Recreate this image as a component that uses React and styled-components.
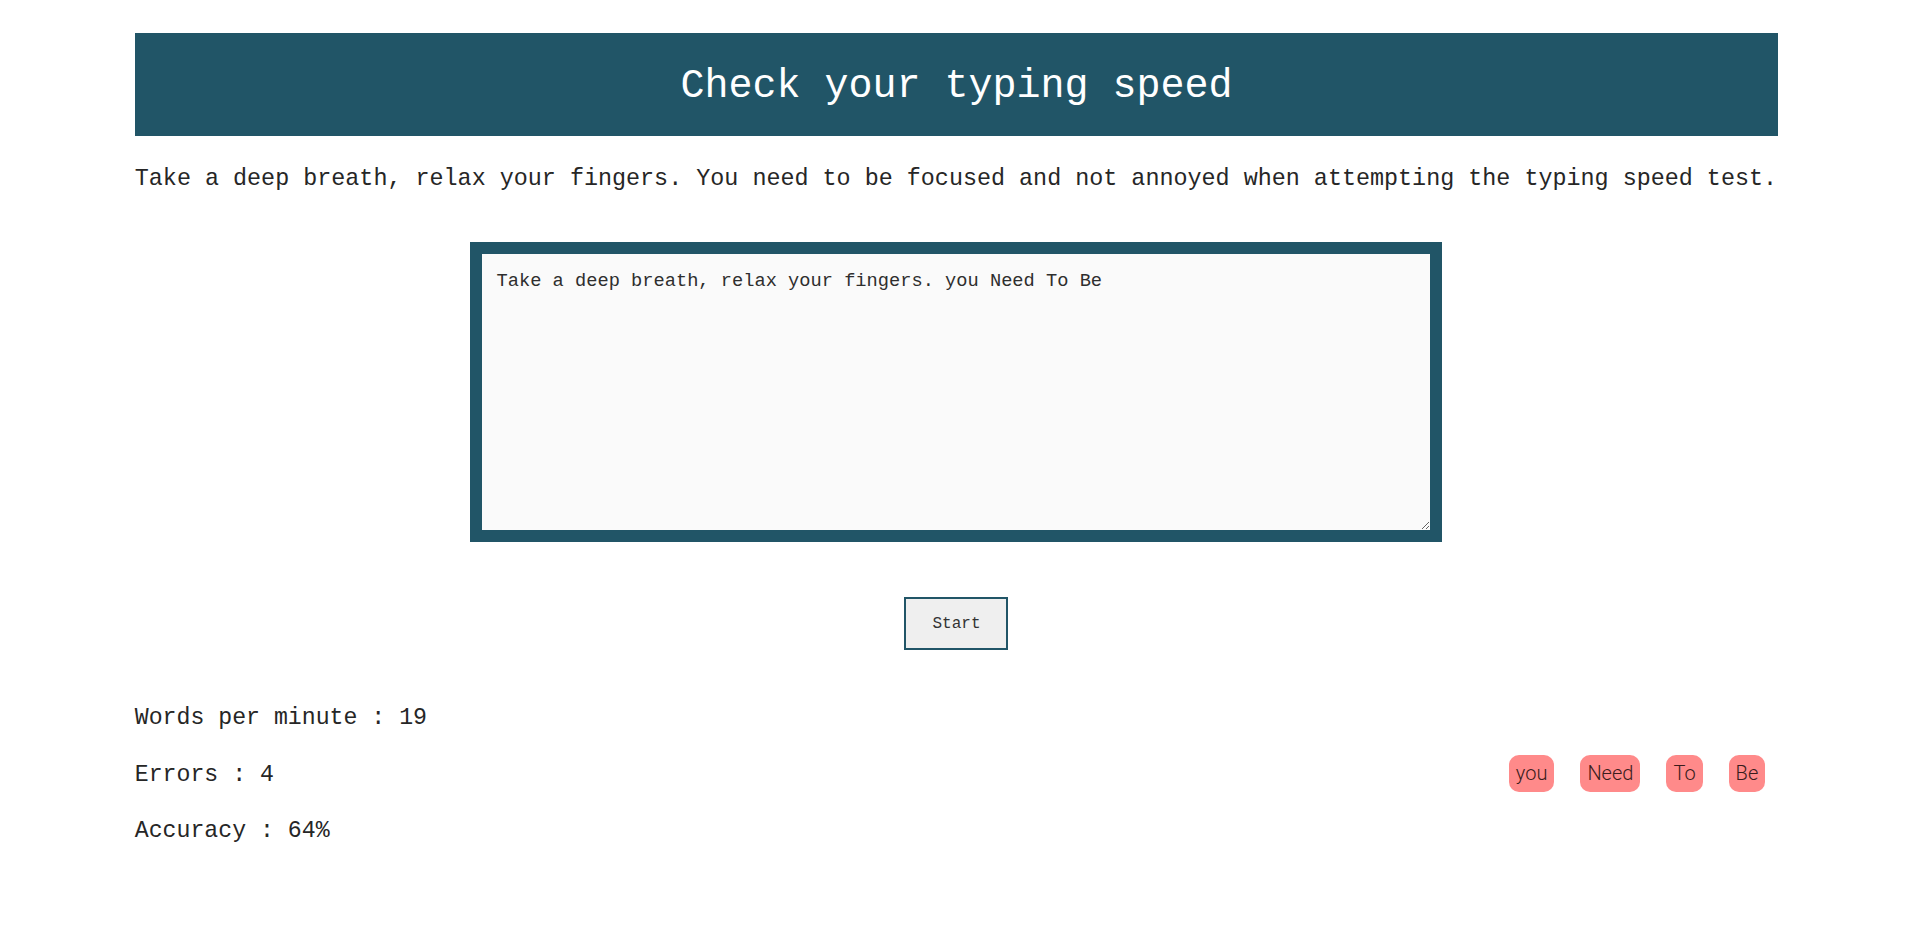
import styled, { createGlobalStyle } from "styled-components";

const typed = "Take a deep breath, relax your fingers. you Need To Be";
const wrongWords = ["you", "Need", "To", "Be"];

const App = () => {
  return (
    <>
      <GlobalStyle />
      <Page>
        <Header>
          <h1>Check your typing speed</h1>
        </Header>
        <Intro>
          Take a deep breath, relax your fingers. You need to be focused and
          not annoyed when attempting the typing speed test.
        </Intro>
        <TypingArea>
          <textarea defaultValue={typed} spellCheck={false} />
        </TypingArea>
        <Controls>
          <StartButton>Start</StartButton>
        </Controls>
        <Results>
          <Stats>
            <p>Words per minute : 19</p>
            <p>Errors : 4</p>
            <p>Accuracy : 64%</p>
          </Stats>
          <Mistakes>
            {wrongWords.map((w) => (
              <Badge key={w}>{w}</Badge>
            ))}
          </Mistakes>
        </Results>
      </Page>
    </>
  );
};

const GlobalStyle = createGlobalStyle`
  body {
    margin: 0;
    background: #fff;
    color: #262626;
    font-family: "Liberation Mono", "DejaVu Sans Mono", monospace;
  }
`;

const Page = styled.div`
  width: 86%;
  margin: 0 auto;
  padding: 33px 0 0 2px;
`;

const Header = styled.div`
  display: flex;
  align-items: center;
  justify-content: center;
  height: 103px;
  background-color: #215567;
  h1 {
    margin: 0;
    padding-top: 4px;
    color: #fff;
    font-size: 40px;
    font-weight: 400;
  }
`;

const Intro = styled.p`
  margin: 29px 0 0;
  font-size: 23.4px;
  line-height: 28px;
  white-space: nowrap;
`;

const TypingArea = styled.div`
  display: flex;
  justify-content: center;
  margin-top: 49px;
  textarea {
    box-sizing: border-box;
    width: 972px;
    height: 300px;
    padding: 16px 14px 12px;
    border: 12px solid #215567;
    background-color: #fafafa;
    color: #2e2e2e;
    font-family: "Liberation Mono", "DejaVu Sans Mono", monospace;
    font-size: 18.7px;
    outline: none;
  }
`;

const Controls = styled.div`
  display: flex;
  justify-content: center;
  margin-top: 55px;
`;

const StartButton = styled.button`
  width: 86px;
  height: 45px;
  box-sizing: content-box;
  padding: 2px 7px;
  border: 2px solid #215567;
  background-color: #efefef;
  color: #333;
  font-family: "Liberation Mono", "DejaVu Sans Mono", monospace;
  font-size: 16px;
  cursor: pointer;
`;

const Results = styled.div`
  display: flex;
  align-items: center;
  justify-content: space-between;
  margin-top: 54px;
`;

const Stats = styled.div`
  display: flex;
  flex-direction: column;
  gap: 28.5px;
  p {
    margin: 0;
    font-size: 23.2px;
    line-height: 28px;
  }
`;

const Mistakes = styled.div`
  display: flex;
  align-items: center;
  margin-bottom: 3px;
`;

const Badge = styled.span`
  margin: 0 13px;
  padding: 0 7px;
  height: 37px;
  line-height: 37px;
  border-radius: 10px;
  background-color: #ff8a8a;
  color: #3a1c1c;
  font-family: Roboto, "Noto Sans", sans-serif;
  font-weight: 300;
  font-size: 20px;
`;

export default App;
